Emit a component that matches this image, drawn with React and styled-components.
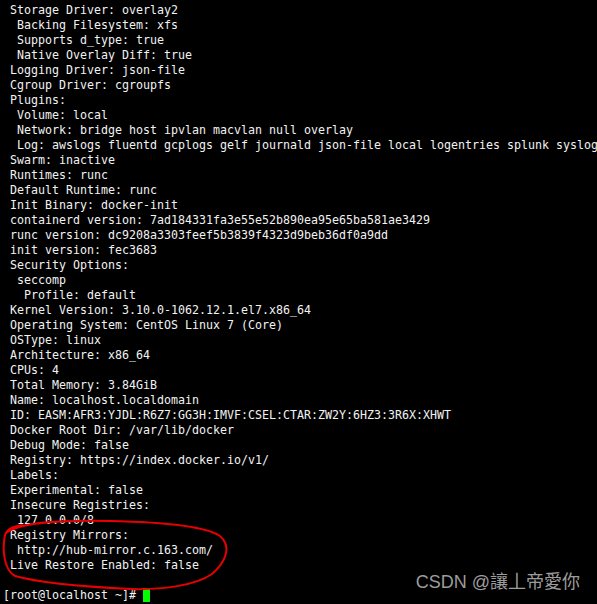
import React from "react";
import styled, { createGlobalStyle } from "styled-components";

const Global = createGlobalStyle`
  html, body {
    margin: 0;
    padding: 0;
    background: #000;
    overflow: hidden;
  }
`;

const Screen = styled.div`
  position: relative;
  width: 597px;
  height: 604px;
  background: #000;
  overflow: hidden;
`;

const Output = styled.div`
  display: flex;
  flex-direction: column;
  padding: 3px 0 0 10px;
  font-family: "DejaVu Sans Mono", "Liberation Mono", monospace;
  font-size: 11.63px;
  line-height: 15px;
  color: #f2f2f2;
`;

const Line = styled.div`
  white-space: pre;
  height: 15px;
  margin-left: ${(p) => p.$shift || 0}px;
`;

const Cursor = styled.span`
  display: inline-block;
  width: 7px;
  height: 14px;
  background: #00ff00;
  vertical-align: -3px;
`;

const Marker = styled.svg`
  position: absolute;
  left: 0;
  top: 0;
  pointer-events: none;
`;

const Watermark = styled.div`
  position: absolute;
  right: 17px;
  top: 571px;
  font-family: "Liberation Sans", "Noto Sans CJK TC", "Noto Sans CJK SC", sans-serif;
  font-size: 18px;
  line-height: 22px;
  color: #9c9c9c;
  white-space: nowrap;
`;

const lines = [
  "Storage Driver: overlay2",
  " Backing Filesystem: xfs",
  " Supports d_type: true",
  " Native Overlay Diff: true",
  "Logging Driver: json-file",
  "Cgroup Driver: cgroupfs",
  "Plugins:",
  " Volume: local",
  " Network: bridge host ipvlan macvlan null overlay",
  " Log: awslogs fluentd gcplogs gelf journald json-file local logentries splunk syslog",
  "Swarm: inactive",
  "Runtimes: runc",
  "Default Runtime: runc",
  "Init Binary: docker-init",
  "containerd version: 7ad184331fa3e55e52b890ea95e65ba581ae3429",
  "runc version: dc9208a3303feef5b3839f4323d9beb36df0a9dd",
  "init version: fec3683",
  "Security Options:",
  " seccomp",
  "  Profile: default",
  "Kernel Version: 3.10.0-1062.12.1.el7.x86_64",
  "Operating System: CentOS Linux 7 (Core)",
  "OSType: linux",
  "Architecture: x86_64",
  "CPUs: 4",
  "Total Memory: 3.84GiB",
  "Name: localhost.localdomain",
  "ID: EASM:AFR3:YJDL:R6Z7:GG3H:IMVF:CSEL:CTAR:ZW2Y:6HZ3:3R6X:XHWT",
  "Docker Root Dir: /var/lib/docker",
  "Debug Mode: false",
  "Registry: https://index.docker.io/v1/",
  "Labels:",
  "Experimental: false",
  "Insecure Registries:",
  " 127.0.0.0/8",
  "Registry Mirrors:",
  " http://hub-mirror.c.163.com/",
  "Live Restore Enabled: false",
  "",
];

export default function App() {
  return (
    <Screen>
      <Global />
      <Output>
        {lines.map((l, i) => (
          <Line key={i}>{l}</Line>
        ))}
        <Line $shift={-7}>
          {"[root@localhost ~]# "}
          <Cursor />
        </Line>
      </Output>
      <Marker width="597" height="604" viewBox="0 0 597 604">
        <path
          d="M 6 533 C 20 522, 60 520, 110 521 C 160 522, 205 526, 220 536 C 232 546, 226 562, 212 574 C 195 586, 160 590, 130 589 C 90 587, 40 583, 15 576 C 4 570, 2 550, 5 535 C 7 528, 14 527, 22 525"
          fill="none"
          stroke="#e60000"
          strokeWidth="2"
          strokeLinecap="round"
        />
      </Marker>
      <Watermark>CSDN @讓丄帝愛你</Watermark>
    </Screen>
  );
}
